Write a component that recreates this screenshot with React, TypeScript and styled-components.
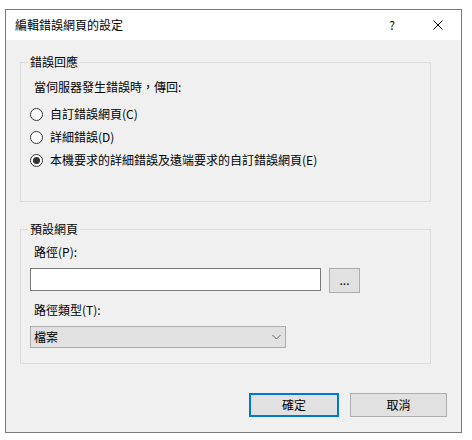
import styled, { createGlobalStyle } from "styled-components";

const GlobalStyle = createGlobalStyle`
  html, body {
    margin: 0;
    padding: 0;
    background: #ffffff;
  }
  body {
    font-family: "Noto Sans CJK TC", "Noto Sans", sans-serif;
    font-size: 12px;
    color: #000000;
  }
`;

const Window = styled.div`
  box-sizing: border-box;
  margin: 9px 0 0 5px;
  width: 457px;
  height: 424px;
  border: 1px solid #7a7a7a;
  display: flex;
  flex-direction: column;
`;

const TitleBar = styled.div`
  height: 30px;
  background: #ffffff;
  display: flex;
  align-items: center;
  padding-left: 9px;
`;

const Title = styled.div`
  flex: 1;
  line-height: 16px;
`;

const CaptionButton = styled.div`
  width: 46px;
  height: 30px;
  display: flex;
  align-items: center;
  justify-content: center;
  line-height: 16px;
`;

const Body = styled.div`
  flex: 1;
  background: #f0f0f0;
  padding: 15px 14px 14px 14px;
  display: flex;
  flex-direction: column;
`;

const Group = styled.fieldset<{ $h: number; $top: number }>`
  box-sizing: border-box;
  margin: ${(p) => p.$top}px 16px 0 0;
  padding: 0;
  min-width: 0;
  height: ${(p) => p.$h}px;
  border: 1px solid #dcdcdc;
`;

const Legend = styled.legend`
  margin-left: 7px;
  padding: 0 2px;
  line-height: 14px;
`;

const GroupContent = styled.div`
  padding-left: 9px;
  display: flex;
  flex-direction: column;
  align-items: flex-start;
`;

const Label = styled.div<{ $top: number }>`
  margin: ${(p) => p.$top}px 0 0 4px;
  line-height: 16px;
`;

const RadioList = styled.div`
  margin-top: 8px;
  display: flex;
  flex-direction: column;
  gap: 1px;
`;

const RadioRow = styled.div`
  height: 22px;
  display: flex;
  align-items: center;
  gap: 7px;
  line-height: 16px;
`;

const RadioCircle = styled.span<{ $checked?: boolean }>`
  box-sizing: border-box;
  width: 13px;
  height: 13px;
  border: 1px solid #333333;
  border-radius: 50%;
  background: #ffffff;
  display: flex;
  align-items: center;
  justify-content: center;

  &::after {
    content: "";
    display: ${(p) => (p.$checked ? "block" : "none")};
    width: 7px;
    height: 7px;
    border-radius: 50%;
    background: #333333;
  }
`;

const InputRow = styled.div`
  margin-top: 8px;
  display: flex;
  align-items: flex-start;
  gap: 8px;
`;

const TextBox = styled.div`
  box-sizing: border-box;
  width: 291px;
  height: 23px;
  background: #ffffff;
  border: 1px solid #7a7a7a;
`;

const BrowseButton = styled.div`
  box-sizing: border-box;
  width: 31px;
  height: 25px;
  background: #e1e1e1;
  border: 1px solid #adadad;
  display: flex;
  align-items: center;
  justify-content: center;
  line-height: 16px;
  padding-bottom: 1px;
`;

const Select = styled.div`
  box-sizing: border-box;
  margin-top: 8px;
  width: 256px;
  height: 22px;
  background: #e1e1e1;
  border: 1px solid #adadad;
  display: flex;
  align-items: center;
  padding: 0 4px 0 3px;
  line-height: 16px;
`;

const SelectText = styled.span`
  flex: 1;
`;

const Footer = styled.div`
  margin-top: 29px;
  display: flex;
  justify-content: flex-end;
  gap: 11px;
`;

const Button = styled.div<{ $primary?: boolean; $w: number }>`
  box-sizing: border-box;
  width: ${(p) => p.$w}px;
  height: 24px;
  background: #e1e1e1;
  border: ${(p) => (p.$primary ? "2px solid #0078d7" : "1px solid #adadad")};
  display: flex;
  align-items: center;
  justify-content: center;
  line-height: 16px;
`;

export default function App() {
  return (
    <>
      <GlobalStyle />
      <Window>
        <TitleBar>
          <Title>編輯錯誤網頁的設定</Title>
          <CaptionButton style={{ paddingLeft: 2 }}>?</CaptionButton>
          <CaptionButton>
            <svg width="10" height="10" viewBox="0 0 10 10">
              <path d="M0.5 0.5 L9.5 9.5 M9.5 0.5 L0.5 9.5" stroke="#000" strokeWidth="1" />
            </svg>
          </CaptionButton>
        </TitleBar>
        <Body>
          <Group $h={147} $top={0}>
            <Legend>錯誤回應</Legend>
            <GroupContent>
              <Label $top={10}>當伺服器發生錯誤時，傳回:</Label>
              <RadioList>
                <RadioRow>
                  <RadioCircle />
                  自訂錯誤網頁(C)
                </RadioRow>
                <RadioRow>
                  <RadioCircle />
                  詳細錯誤(D)
                </RadioRow>
                <RadioRow>
                  <RadioCircle $checked />
                  本機要求的詳細錯誤及遠端要求的自訂錯誤網頁(E)
                </RadioRow>
              </RadioList>
            </GroupContent>
          </Group>
          <Group $h={142} $top={20}>
            <Legend>預設網頁</Legend>
            <GroupContent>
              <Label $top={8}>路徑(P):</Label>
              <InputRow>
                <TextBox />
                <BrowseButton>...</BrowseButton>
              </InputRow>
              <Label $top={9}>路徑類型(T):</Label>
              <Select>
                <SelectText>檔案</SelectText>
                <svg width="9" height="6" viewBox="0 0 9 6">
                  <path d="M0.5 1 L4.5 5 L8.5 1" fill="none" stroke="#606060" strokeWidth="1" />
                </svg>
              </Select>
            </GroupContent>
          </Group>
          <Footer>
            <Button $primary $w={90}>確定</Button>
            <Button $w={97}>取消</Button>
          </Footer>
        </Body>
      </Window>
    </>
  );
}
